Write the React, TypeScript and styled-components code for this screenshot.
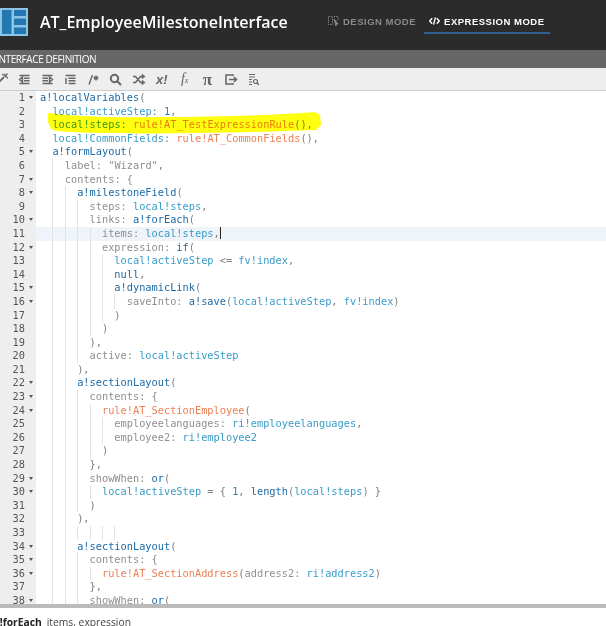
import React from 'react';
import styled, { createGlobalStyle } from 'styled-components';

const Global = createGlobalStyle`
  html, body { margin: 0; padding: 0; background: #fff; }
  body { width: 606px; height: 626px; overflow: hidden; font-family: "Open Sans", "Liberation Sans", sans-serif; }
`;

const Page = styled.div`
  width: 606px; height: 626px; display: flex; flex-direction: column; overflow: hidden; position: relative;
`;
const Header = styled.header`
  height: 50px; background: #2b2b2b; display: flex; align-items: center; flex: none;
  padding-bottom: 6px; box-sizing: border-box;
`;
const Logo = styled.svg`
  width: 28px; height: 28px; flex: none;
`;
const Title = styled.h1`
  margin: 0 0 0 12px; font: 600 16px "Open Sans", sans-serif; color: #fff; width: 283px; white-space: nowrap;
`;
const Tab = styled.div<{ $active?: boolean }>`
  display: flex; align-items: center; gap: 4px; height: 23px; padding: 0 ${p => (p.$active ? '6px' : '5px')} 0 5px;
  font: 700 9.5px "Liberation Sans", sans-serif; letter-spacing: .5px;
  color: ${p => (p.$active ? '#fff' : '#8a8a8a')};
  border-bottom: 2px solid ${p => (p.$active ? '#2f5f8f' : 'transparent')};
  box-sizing: border-box;
`;
const Tabs = styled.div`
  display: flex; gap: 3px;
`;
const SectionBar = styled.div`
  height: 18px; background: #666; color: #fff; flex: none; display: flex; align-items: center;
  font: 400 10px "Open Sans", sans-serif; letter-spacing: -.4px; text-indent: -4px; white-space: nowrap; overflow: hidden;
`;
const Toolbar = styled.div`
  height: 23px; background: #eee; border-bottom: 1px solid #ccc; flex: none; display: flex; align-items: center;
  gap: 7.9px; color: #666; box-sizing: border-box; overflow: hidden;
  & > :first-child { margin-left: -6px; }
`;
const Tool = styled.svg`
  width: 15px; height: 15px; flex: none; fill: none; stroke: #666; stroke-width: 1.4;
`;
const Editor = styled.div`
  height: 513px; flex: none; overflow: hidden; position: relative;
`;
const Row = styled.div<{ $current?: boolean }>`
  display: flex; height: 13.6px;
  font: 400 10.3px/13.6px "DejaVu Sans Mono", monospace;
  background: ${p => (p.$current ? '#eff4fa' : 'transparent')};
  white-space: pre;
  position: relative;
`;
const Gutter = styled.div`
  width: 36px; flex: none; background: #eee; color: #555; display: flex; justify-content: flex-end;
  box-sizing: border-box; position: relative; padding-right: 11px;
`;
const Fold = styled.span`
  position: absolute; left: 29px; top: 5px; width: 0; height: 0;
  border-left: 2.2px solid transparent; border-right: 2.2px solid transparent; border-top: 3px solid #555;
`;
const Code = styled.div`
  padding-left: 4px; display: flex; position: relative;
`;
const Guide = styled.span<{ $line?: boolean }>`
  display: inline-block; width: 12.4px; height: 13.6px; box-sizing: border-box;
  border-left: ${p => (p.$line ? '1px solid #e2e2e2' : 'none')};
`;
const Tok = styled.span<{ $c: string }>`
  color: ${p => p.$c};
`;
const Caret = styled.span`
  display: inline-block; width: 1px; height: 12px; background: #222; vertical-align: -2px;
`;
const Highlight = styled.svg`
  position: absolute; left: 48px; top: 19px; width: 273px; height: 24px; z-index: 2;
  mix-blend-mode: multiply; pointer-events: none;
`;
const Divider = styled.div`
  height: 4px; background: #bbb; flex: none;
`;
const Footer = styled.div`
  flex: 1; display: flex; align-items: center; font: 400 10.3px "Open Sans", sans-serif; color: #444;
  white-space: nowrap; overflow: hidden; padding-top: 10px; gap: 5px; margin-left: -6.5px;
`;
const Strong = styled.b`
  color: #222; font-weight: 700;
`;
const Symbol = styled.span<{ $serif?: boolean; $size: number }>`
  font: ${p => (p.$serif ? 'italic 400' : 'italic 700')} ${p => p.$size}px ${p => (p.$serif ? '"Liberation Serif", serif' : '"Liberation Sans", sans-serif')};
  color: #666; width: 15px; text-align: center; flex: none; white-space: nowrap; line-height: 15px;
`;
const SmallX = styled.span`
  font-size: 8px;
`;
const Pi = styled.span`
  font: 700 17px/15px "Liberation Serif", serif; color: #666; width: 15px; text-align: center; flex: none;
`;

const C: Record<string, string> = {
  f: '#1c6aa6', v: '#3a9cc8', r: '#ea7f55', k: '#8f8f8f', p: '#7f7f7f', n: '#2f7fb5', s: '#8f8f8f',
};
type T = [string, string];
type L = { i: number; t: T[]; fold?: boolean };
const k = (s: string): T => ['k', s];
const f = (s: string): T => ['f', s];
const v = (s: string): T => ['v', s];
const r = (s: string): T => ['r', s];
const p = (s: string): T => ['p', s];

const lines: L[] = [
  { i: 0, fold: true, t: [f('a!localVariables'), p('(')] },
  { i: 1, t: [v('local!activeStep'), p(': '), ['n', '1'], p(',')] },
  { i: 1, t: [v('local!steps'), p(': '), r('rule!AT_TestExpressionRule'), p('(),')] },
  { i: 1, t: [v('local!CommonFields'), p(': '), r('rule!AT_CommonFields'), p('(),')] },
  { i: 1, fold: true, t: [f('a!formLayout'), p('(')] },
  { i: 2, t: [k('label: '), ['s', '"Wizard"'], p(',')] },
  { i: 2, fold: true, t: [k('contents: {')] },
  { i: 3, fold: true, t: [f('a!milestoneField'), p('(')] },
  { i: 4, t: [k('steps: '), v('local!steps'), p(',')] },
  { i: 4, fold: true, t: [k('links: '), f('a!forEach'), p('(')] },
  { i: 5, t: [k('items: '), v('local!steps'), p(','), ['caret', '']] },
  { i: 5, fold: true, t: [k('expression: '), f('if'), p('(')] },
  { i: 6, t: [v('local!activeStep'), p(' <= '), v('fv!index'), p(',')] },
  { i: 6, t: [f('null'), p(',')] },
  { i: 6, fold: true, t: [f('a!dynamicLink'), p('(')] },
  { i: 7, fold: true, t: [k('saveInto: '), f('a!save'), p('('), v('local!activeStep'), p(', '), v('fv!index'), p(')')] },
  { i: 6, t: [p(')')] },
  { i: 5, t: [p(')')] },
  { i: 4, t: [p('),')] },
  { i: 4, t: [k('active: '), v('local!activeStep')] },
  { i: 3, t: [p('),')] },
  { i: 3, fold: true, t: [f('a!sectionLayout'), p('(')] },
  { i: 4, fold: true, t: [k('contents: {')] },
  { i: 5, fold: true, t: [r('rule!AT_SectionEmployee'), p('(')] },
  { i: 6, t: [k('employeelanguages: '), v('ri!employeelanguages'), p(',')] },
  { i: 6, t: [k('employee2: '), v('ri!employee2')] },
  { i: 5, t: [p(')')] },
  { i: 4, t: [p('},')] },
  { i: 4, fold: true, t: [k('showWhen: '), f('or'), p('(')] },
  { i: 5, fold: true, t: [v('local!activeStep'), p(' = { '), ['n', '1'], p(', '), f('length'), p('('), v('local!steps'), p(') }')] },
  { i: 4, t: [p(')')] },
  { i: 3, t: [p('),')] },
  { i: 7, t: [] },
  { i: 3, fold: true, t: [f('a!sectionLayout'), p('(')] },
  { i: 4, fold: true, t: [k('contents: {')] },
  { i: 5, fold: true, t: [r('rule!AT_SectionAddress'), p('('), k('address2: '), v('ri!address2'), p(')')] },
  { i: 4, t: [p('},')] },
  { i: 4, fold: true, t: [k('showWhen: '), f('or'), p('(')] },
];

const AppLogo = () => (
  <Logo viewBox="0 0 28 28">
    <rect width="28" height="28" fill="#8cc4e8" />
    <rect x="2" y="2" width="9.5" height="24" fill="#2478b0" />
    <rect x="14" y="2" width="12" height="6" fill="#2478b0" />
    <rect x="14" y="10.5" width="12" height="6.5" fill="#2478b0" />
    <rect x="14" y="19.5" width="12" height="6.5" fill="#2478b0" />
  </Logo>
);

export default function App() {
  return (
    <Page>
      <Global />
      <Header>
        <AppLogo />
        <Title>AT_EmployeeMilestoneInterface</Title>
        <Tabs>
          <Tab>
            <svg width="11" height="10" viewBox="0 0 11 10" fill="none" stroke="#8a8a8a" strokeWidth="1" strokeDasharray="1.2 1">
              <path d="M.5.5h4v8h-4zM6 .5h4v4" />
              <path d="M6 3l4 5-2 0 0 2z" fill="#8a8a8a" strokeDasharray="none" />
            </svg>
            DESIGN MODE
          </Tab>
          <Tab $active>
            <svg width="11" height="10" viewBox="0 0 12 10" fill="none" stroke="#fff" strokeWidth="1.5">
              <path d="M3.5 2 .8 5l2.7 3M8.5 2l2.7 3-2.7 3M7 1 5 9" />
            </svg>
            EXPRESSION MODE
          </Tab>
        </Tabs>
      </Header>
      <SectionBar>INTERFACE DEFINITION</SectionBar>
      <Toolbar>
        <Tool viewBox="0 0 15 15"><path d="M2.5 12.5 10 5M10 2.5l2.5 2.5M12.5 1.5l.5 1.5M14 5.5l-1.2.3M8.5 2l.6 1" strokeWidth="1.8" /></Tool>
        <Tool viewBox="0 0 15 15"><path d="M2.5 3.5h10M7 6.2h5.5M7 8.8h5.5M2.5 11.5h10M5.5 5 2.5 7.5 5.5 10z" /></Tool>
        <Tool viewBox="0 0 15 15"><path d="M2.5 3.5h10M2.5 6.2H8M2.5 8.8H8M2.5 11.5h10M9.5 5l3 2.5-3 2.5z" /></Tool>
        <Tool viewBox="0 0 15 15"><path d="M2.5 3.5h10M5.5 6.2h7M5.5 8.8h7M5.5 11.5h7M3 6v6" strokeWidth="1.5" /></Tool>
        <Tool viewBox="0 0 15 15"><path d="M3 12.5 6.5 3M10 3.5v5M7.8 4.8l4.4 2.4M12.2 4.8 7.8 7.2" /></Tool>
        <Tool viewBox="0 0 15 15"><path d="M6.5 2.8a3.7 3.7 0 1 1 0 7.4 3.7 3.7 0 0 1 0-7.4zM9.3 9.3l3.7 3.7" strokeWidth="2" /></Tool>
        <Tool viewBox="0 0 15 15"><path d="M2 4.5h2.5l5 6H12M2 10.5h2.5l5-6H12M10.8 2.5l2.5 2-2.5 2M10.8 8.5l2.5 2-2.5 2" strokeWidth="1.5" /></Tool>
        <Symbol $size={13}>x!</Symbol>
        <Symbol $serif $size={14}>f<SmallX>x</SmallX></Symbol>
        <Pi>π</Pi>
        <Tool viewBox="0 0 15 15"><path d="M10 4V3H3v9h7v-1M6 7.5h7.5M10.8 5l2.7 2.5-2.7 2.5" strokeWidth="1.6" /></Tool>
        <Tool viewBox="0 0 15 15"><path d="M3 2.5h6M3 5h6M3 7.5h3M3 10h3M3 12.5h3M9.5 7.5a2 2 0 1 1 0 4 2 2 0 0 1 0-4zM11 11l2 2" strokeWidth="1.2" /></Tool>
      </Toolbar>
      <Editor>
        <Highlight viewBox="0 0 273 24">
          <path d="M0 3 C25 6 60 8 110 7 C170 7 230 5 267 2 L272 5 L273 15 L268 20 C200 23 100 24 45 23 C25 22 8 22 3 19 L0 12 Z" fill="#ffff10" />
        </Highlight>
        {lines.map((l, n) => (
          <Row key={n} $current={n === 10}>
            <Gutter>
              {n + 1}
              {l.fold && <Fold />}
            </Gutter>
            <Code>
              {Array.from({ length: l.i }).map((_, j) => (
                <Guide key={j} $line={j > 0} />
              ))}
              <span>
                {l.t.map(([c, s], j) =>
                  c === 'caret' ? <Caret key={j} /> : <Tok key={j} $c={C[c]}>{s}</Tok>
                )}
              </span>
            </Code>
          </Row>
        ))}
      </Editor>
      <Divider />
      <Footer>
        <Strong>a!forEach</Strong>
        <span>items, expression</span>
      </Footer>
    </Page>
  );
}
